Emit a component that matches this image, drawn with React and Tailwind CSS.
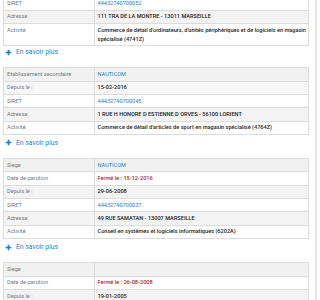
import React from 'react';

const blocks = [
  {
    clipTop: true,
    rows: [
      { label: 'SIRET', value: '44432740700052', kind: 'link', bg: 'white' },
      { label: 'Adresse', value: '111 TRA DE LA MONTRE - 13011 MARSEILLE', bg: 'gray' },
      {
        label: 'Activité',
        value: ["Commerce de détail d'ordinateurs, d'unités périphériques et de logiciels en magasin", 'spécialisé (4741Z)'],
        bg: 'white',
      },
    ],
  },
  {
    rows: [
      { label: 'Etablissement secondaire', value: 'NAUTICOM', kind: 'link', bg: 'head' },
      { label: 'Depuis le :', value: '15-02-2016', bg: 'light' },
      { label: 'SIRET', value: '44432740700045', kind: 'link', bg: 'white' },
      { label: 'Adresse', value: '1 RUE H HONORE D ESTIENNE D ORVES - 56100 LORIENT', bg: 'gray' },
      { label: 'Activité', value: "Commerce de détail d'articles de sport en magasin spécialisé (4764Z)", bg: 'white' },
    ],
  },
  {
    rows: [
      { label: 'Siege', value: 'NAUTICOM', kind: 'link', bg: 'head' },
      { label: 'Date de parution', value: 'Fermé le : 15-12-2016', kind: 'closed', bg: 'white' },
      { label: 'Depuis le :', value: '29-06-2008', bg: 'gray' },
      { label: 'SIRET', value: '44432740700037', kind: 'link', bg: 'white' },
      { label: 'Adresse', value: '49 RUE SAMATAN - 13007 MARSEILLE', bg: 'gray' },
      { label: 'Activité', value: 'Conseil en systèmes et logiciels informatiques (6202A)', bg: 'white' },
    ],
  },
  {
    last: true,
    rows: [
      { label: 'Siege', value: '', bg: 'head' },
      { label: 'Date de parution', value: 'Fermé le : 26-08-2008', kind: 'closed', bg: 'white' },
      { label: 'Depuis le :', value: '19-01-2005', bg: 'gray' },
    ],
  },
];

const bgClass = {
  white: 'bg-white',
  gray: 'bg-[#f3f3f3]',
  light: 'bg-[#f7f7f7]',
  head: 'bg-[#f1f1f1]',
};

function Value({ row }) {
  if (row.kind === 'link') return <span className="text-[#1e7fd0]">{row.value}</span>;
  if (row.kind === 'closed') return <span className="font-medium text-[#b3261e]">{row.value}</span>;
  if (Array.isArray(row.value)) {
    return (
      <span className="font-medium text-[#222]">
        {row.value[0]}
        <br />
        {row.value[1]}
      </span>
    );
  }
  return <span className="font-medium text-[#222]">{row.value}</span>;
}

function InfoTable({ rows, clipTop }) {
  return (
    <div className={`border-x border-b border-[#dcdcdc] ${clipTop ? '' : 'border-t'}`}>
      {rows.map((row, i) => (
        <div
          key={i}
          className={`grid grid-cols-[91px_1fr] text-[5.6px] leading-[9px] ${bgClass[row.bg]} ${i > 0 ? 'border-t border-[#dcdcdc]' : ''}`}
        >
          <div className="border-r border-[#dcdcdc] px-[3px] py-[1.67px] text-[#7a7a7a]">{row.label}</div>
          <div className="px-[2.5px] py-[1.67px] whitespace-nowrap">
            <Value row={row} />
          </div>
        </div>
      ))}
    </div>
  );
}

function MoreLink({ first }) {
  return (
    <div
      className={`flex items-center gap-[4px] pl-[2px] text-[6.8px] text-[#1e7fd0] ${first ? 'mb-[8.83px] h-[12px]' : 'mb-[7.33px] h-[16px]'}`}
    >
      <svg width="7" height="7" viewBox="0 0 10 10">
        <path d="M5 1v8M1 5h8" stroke="#1e7fd0" strokeWidth="2.4" />
      </svg>
      <span>En savoir plus</span>
    </div>
  );
}

export default function App() {
  return (
    <div className="flex h-[300px] w-[320px] overflow-hidden bg-white" style={{ fontFamily: 'Roboto, "Noto Sans", sans-serif' }}>
      <div className="w-[315px] pl-[3px] pr-[6px]">
        <div className="-mt-[2.5px]">
          {blocks.map((b, i) => (
            <div key={i}>
              <InfoTable rows={b.rows} clipTop={b.clipTop} />
              {!b.last && <MoreLink first={i === 0} />}
            </div>
          ))}
        </div>
      </div>
      <div className="w-[2px] bg-[#e6e6e6]" />
    </div>
  );
}
